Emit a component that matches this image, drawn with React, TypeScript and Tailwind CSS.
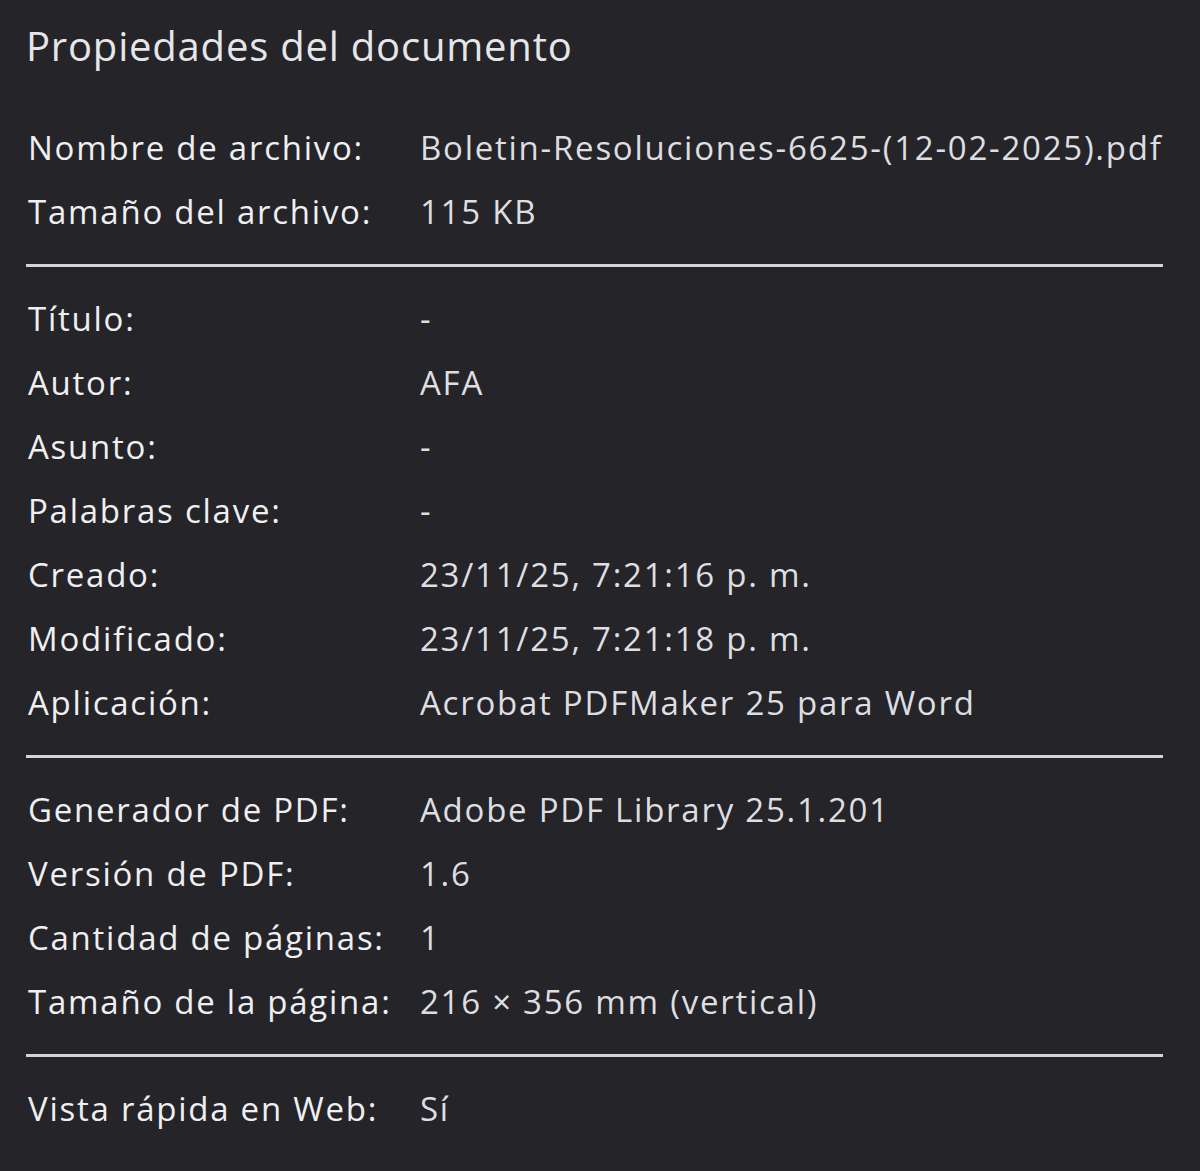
import React from 'react';

type Row = { label: string; value: string };

const sections: Row[][] = [
  [
    { label: 'Nombre de archivo:', value: 'Boletin-Resoluciones-6625-(12-02-2025).pdf' },
    { label: 'Tamaño del archivo:', value: '115 KB' },
  ],
  [
    { label: 'Título:', value: '-' },
    { label: 'Autor:', value: 'AFA' },
    { label: 'Asunto:', value: '-' },
    { label: 'Palabras clave:', value: '-' },
    { label: 'Creado:', value: '23/11/25, 7:21:16 p. m.' },
    { label: 'Modificado:', value: '23/11/25, 7:21:18 p. m.' },
    { label: 'Aplicación:', value: 'Acrobat PDFMaker 25 para Word' },
  ],
  [
    { label: 'Generador de PDF:', value: 'Adobe PDF Library 25.1.201' },
    { label: 'Versión de PDF:', value: '1.6' },
    { label: 'Cantidad de páginas:', value: '1' },
    { label: 'Tamaño de la página:', value: '216 × 356 mm (vertical)' },
  ],
  [{ label: 'Vista rápida en Web:', value: 'Sí' }],
];

export default function App() {
  return (
    <div className="w-[1200px] h-[1171px] bg-[#242429] pl-[28px] pr-[37px] pt-[18px] font-['Segoe_UI','Open_Sans',sans-serif] overflow-hidden">
      <h1 className="text-[40px] leading-[56px] tracking-[0.8px] text-[#e6e6e8] -ml-[2px] mb-[42px]">
        Propiedades del documento
      </h1>
      {sections.map((rows, i) => (
        <div key={i}>
          {i > 0 && <div className="h-[3px] bg-[#d4d4d6] -ml-[2px] my-[20px]" />}
          {rows.map((r) => (
            <div key={r.label} className="grid grid-cols-[392px_1fr] h-[64px] items-center text-[33px] tracking-[1.75px]">
              <span className="text-[#efeff1] whitespace-nowrap">{r.label}</span>
              <span className="text-[#dedee0] whitespace-nowrap">{r.value}</span>
            </div>
          ))}
        </div>
      ))}
    </div>
  );
}
